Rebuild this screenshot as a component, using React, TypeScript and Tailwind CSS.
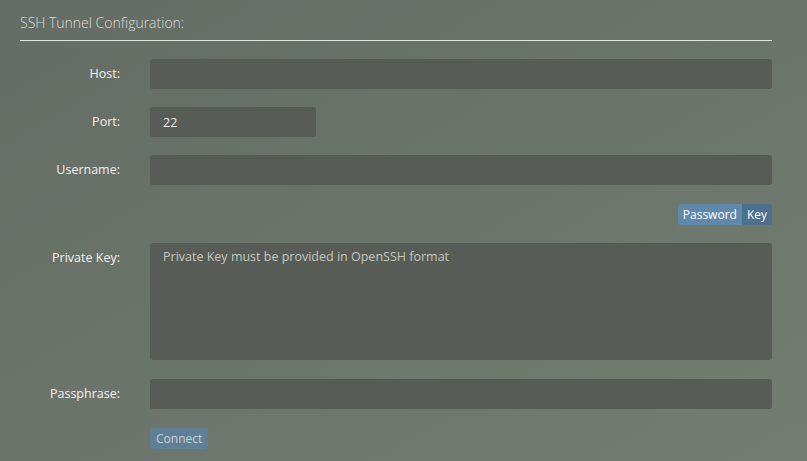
import React, { useState } from "react";

const font = { fontFamily: '"Open Sans", "Noto Sans", sans-serif' };

// label + control row
const Row = ({ label, children, className = "" }: { label: string; children: React.ReactNode; className?: string }) => (
  <div className={`flex items-center ${className}`}>
    <label className="w-[120px] shrink-0 text-right text-[12.5px] text-[#f2f2f2]">{label}</label>
    <div className="ml-[30px] flex-1">{children}</div>
  </div>
);

const inputCls =
  "h-[30px] rounded-[3px] bg-[#575c56] px-[13px] text-[12.5px] text-[#eeeeee] outline-none placeholder:text-[#c3c7bf]";

export default function App() {
  const [mode, setMode] = useState<"password" | "key">("key");

  return (
    <div style={font} className="h-[461px] w-[807px] overflow-hidden bg-gradient-to-br from-[#646c65] to-[#737d71] pl-[20px] pr-[35px]">
      <div className="pt-[14px]">
        <h2 className="pb-[8px] text-[14px] font-light text-[#d9ddd8] leading-[18px]">SSH Tunnel Configuration:</h2>
        <div className="h-px bg-[#e4e6e3]" />
      </div>

      <div className="-ml-[20px] flex flex-col">
        <Row label="Host:" className="mt-[18px]">
          <input className={`${inputCls} w-full`} />
        </Row>
        <Row label="Port:" className="mt-[18px]">
          <input className={`${inputCls} w-[166px]`} defaultValue="22" />
        </Row>
        <Row label="Username:" className="mt-[18px]">
          <input className={`${inputCls} w-full`} />
        </Row>

        <div className="mt-[19px] flex justify-end">
          <div className="flex overflow-hidden rounded-[3px] text-[12px] leading-[21px] text-white">
            <button
              onClick={() => setMode("password")}
              className={`px-[5px] ${mode === "password" ? "bg-[#4d6f8e]" : "bg-[#5f88ab]"}`}
            >
              Password
            </button>
            <button
              onClick={() => setMode("key")}
              className={`px-[5px] ${mode === "key" ? "bg-[#4d6f8e]" : "bg-[#5f88ab]"}`}
            >
              Key
            </button>
          </div>
        </div>

        <div className="mt-[18px] flex items-start">
          <label className="w-[120px] shrink-0 pt-[6px] text-right text-[12.5px] text-[#f2f2f2]">Private Key:</label>
          <textarea
            className="ml-[30px] h-[117px] flex-1 resize-none rounded-[3px] bg-[#575c56] px-[13px] py-[5px] text-[12.5px] text-[#eeeeee] outline-none placeholder:text-[#c3c7bf]"
            placeholder="Private Key must be provided in OpenSSH format"
          />
        </div>

        <Row label="Passphrase:" className="mt-[19px]">
          <input type="password" className={`${inputCls} w-full`} />
        </Row>

        <div className="ml-[150px] mt-[16px]">
          <button className="rounded-[3px] bg-[#5f7f96] px-[6px] text-[12px] leading-[21px] text-[#c9d1d5]">Connect</button>
        </div>
      </div>
    </div>
  );
}
